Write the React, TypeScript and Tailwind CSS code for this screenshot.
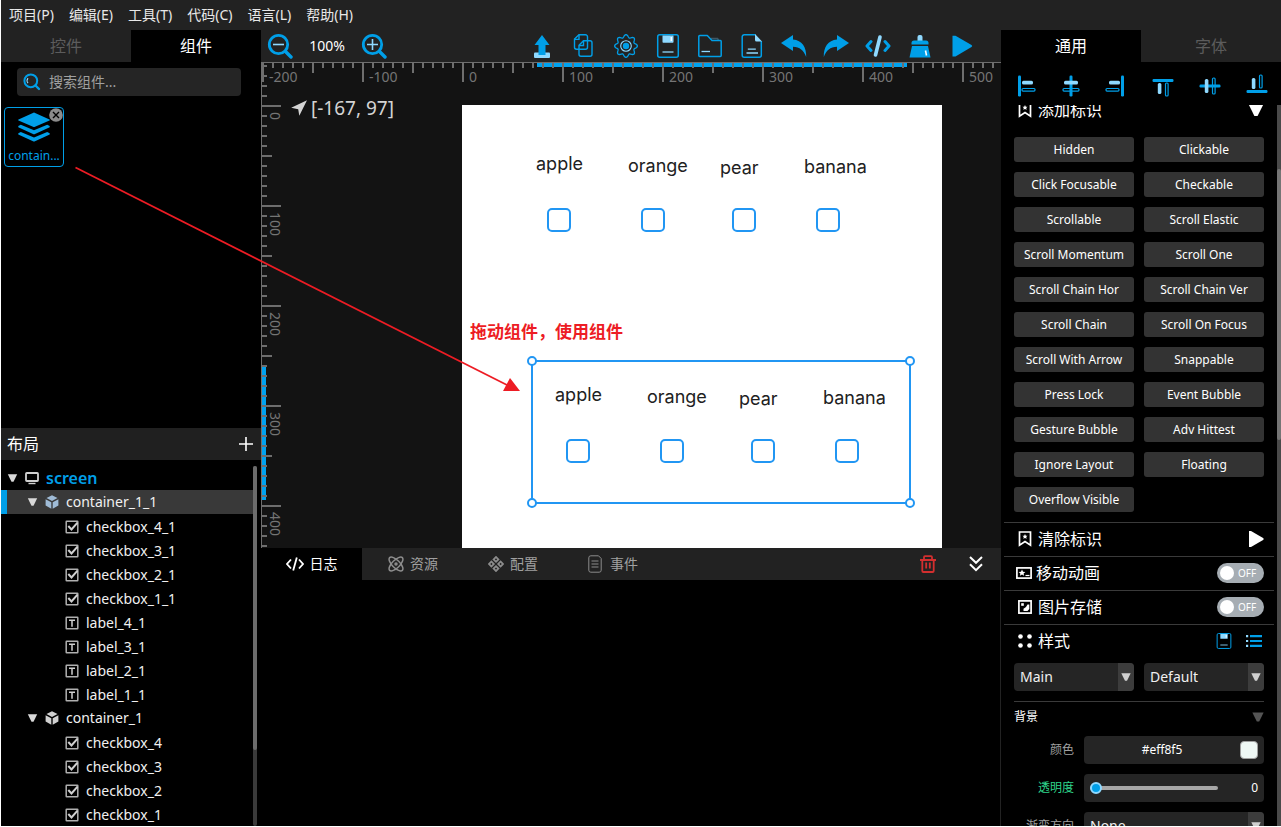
import React, { useState } from 'react';

type IconProps = { className?: string };

type TreeNode = {
  name: string;
  kind: 'screen' | 'container' | 'checkbox' | 'label';
  level: 0 | 1 | 2;
};

const MENUS = ['项目(P)', '编辑(E)', '工具(T)', '代码(C)', '语言(L)', '帮助(H)'];

const TREE: TreeNode[] = [
  { name: 'screen', kind: 'screen', level: 0 },
  { name: 'container_1_1', kind: 'container', level: 1 },
  { name: 'checkbox_4_1', kind: 'checkbox', level: 2 },
  { name: 'checkbox_3_1', kind: 'checkbox', level: 2 },
  { name: 'checkbox_2_1', kind: 'checkbox', level: 2 },
  { name: 'checkbox_1_1', kind: 'checkbox', level: 2 },
  { name: 'label_4_1', kind: 'label', level: 2 },
  { name: 'label_3_1', kind: 'label', level: 2 },
  { name: 'label_2_1', kind: 'label', level: 2 },
  { name: 'label_1_1', kind: 'label', level: 2 },
  { name: 'container_1', kind: 'container', level: 1 },
  { name: 'checkbox_4', kind: 'checkbox', level: 2 },
  { name: 'checkbox_3', kind: 'checkbox', level: 2 },
  { name: 'checkbox_2', kind: 'checkbox', level: 2 },
  { name: 'checkbox_1', kind: 'checkbox', level: 2 },
];

const FLAGS = [
  'Hidden', 'Clickable',
  'Click Focusable', 'Checkable',
  'Scrollable', 'Scroll Elastic',
  'Scroll Momentum', 'Scroll One',
  'Scroll Chain Hor', 'Scroll Chain Ver',
  'Scroll Chain', 'Scroll On Focus',
  'Scroll With Arrow', 'Snappable',
  'Press Lock', 'Event Bubble',
  'Gesture Bubble', 'Adv Hittest',
  'Ignore Layout', 'Floating',
  'Overflow Visible',
];

// Widgets inside one fruit container, relative to its top left corner
const FRUITS = [
  { text: 'apple', x: 24, y: 23, boxX: 35 },
  { text: 'orange', x: 116, y: 25, boxX: 129 },
  { text: 'pear', x: 208, y: 27, boxX: 220 },
  { text: 'banana', x: 292, y: 26, boxX: 304 },
];

const BLUE = '#009fe8';
const PALE = '#8fd9ff';

/* ---------- icons ---------- */

function ZoomIcon({ plus }: { plus?: boolean }) {
  return (
    <svg viewBox="0 0 26 26" className="size-[26px]" fill="none">
      <circle cx="11.5" cy="11.5" r="9.2" stroke={BLUE} strokeWidth="2.8" />
      <path d="M18.5 18.5L24 24" stroke={BLUE} strokeWidth="3.4" strokeLinecap="round" />
      <path d={plus ? 'M6 11.5h11M11.5 6v11' : 'M6 11.5h11'} stroke={PALE} strokeWidth="1.6" />
    </svg>
  );
}

function SearchIcon() {
  return (
    <svg viewBox="0 0 18 18" className="size-[18px] shrink-0" fill="none">
      <circle cx="7.8" cy="7.8" r="6.4" stroke={BLUE} strokeWidth="2" />
      <path d="M12.5 12.5L16 16" stroke={BLUE} strokeWidth="2.4" strokeLinecap="round" />
      <path d="M5 5.2a4 4 0 0 0 0 5" stroke={PALE} strokeWidth="1.1" />
    </svg>
  );
}

function UploadIcon() {
  return (
    <svg viewBox="0 0 24 24" className="size-6">
      <rect x="4" y="18.5" width="16" height="5.5" rx="1" fill={PALE} />
      <path d="M12 1l7.5 10h-4v10h-7V11h-4z" fill={BLUE} />
    </svg>
  );
}

function CopyIcon() {
  return (
    <svg viewBox="0 0 24 24" className="size-6" fill="none" stroke={BLUE} strokeWidth="1.4">
      <path d="M7 .8h6.5a2 2 0 0 1 2 2v10.4a2 2 0 0 1-2 2h-9a2 2 0 0 1-2-2V5z" />
      <path d="M2.500 5.400H7V.8" />
      <path d="M11.500 6.800H18a2 2 0 0 1 2 2v11.400a2 2 0 0 1-2 2H9a2 2 0 0 1-2-2V11.300z" />
      <path d="M7 11.500h4.500V6.800" />
    </svg>
  );
}

// outline with eight soft teeth
const GEAR_POINTS = Array.from({ length: 96 }, (_, i) => {
  const a = (i / 96) * Math.PI * 2;
  const r = 10 + 1.4 * Math.cos(a * 8);
  return `${(12 + r * Math.cos(a)).toFixed(2)},${(12 + r * Math.sin(a)).toFixed(2)}`;
}).join(' ');

function GearIcon() {
  return (
    <svg viewBox="0 0 24 24" className="size-6" fill="none">
      <polygon points={GEAR_POINTS} stroke={BLUE} strokeWidth="1.3" />
      <circle cx="12" cy="12" r="5.3" stroke={PALE} strokeWidth="1.1" />
      <circle cx="12" cy="12" r="3.2" fill={BLUE} />
    </svg>
  );
}

function SaveIcon({ className = 'size-6' }: IconProps) {
  return (
    <svg viewBox="0 0 24 24" className={className} fill="none">
      <rect x="1.700" y=".8" width="20.600" height="22.400" rx="2" stroke={BLUE} strokeWidth="1.500" />
      <path d="M6.500 1.500h11v6.500a.8.800 0 0 1-.8.800H7.300a.8.800 0 0 1-.8-.8z" fill={PALE} />
      <path d="M15.300 3v4" stroke="#fff" strokeWidth="1.500" />
      <path d="M6.500 18h11" stroke={PALE} strokeWidth="1.300" />
    </svg>
  );
}

function FolderIcon() {
  return (
    <svg viewBox="0 0 24 24" className="size-6" fill="none">
      <path d="M13 4.500h6.500l1 1.500" stroke="#3f5663" strokeWidth="1.500" />
      <path
        d="M.8 2.500a1 1 0 0 1 1-1h7.500L14 6.500h8.400a.9.900 0 0 1 .8.900v14.200a.9.900 0 0 1-.9.900H1.700a.9.900 0 0 1-.9-.9z"
        stroke={BLUE}
        strokeWidth="1.500"
        strokeLinejoin="round"
      />
      <path d="M3.500 17.500h8.500" stroke={PALE} strokeWidth="1.300" />
    </svg>
  );
}

function DocIcon() {
  return (
    <svg viewBox="0 0 24 24" className="size-6" fill="none">
      <path
        d="M15.500.8H4.200a2 2 0 0 0-2 2v18.400a2 2 0 0 0 2 2h15.100a2 2 0 0 0 2-2V7"
        stroke={BLUE}
        strokeWidth="1.500"
      />
      <path d="M15 0l7 7.500h-5.500A1.500 1.500 0 0 1 15 6z" fill={PALE} />
      <path d="M7.800 15.200h8M6.500 19h11.500" stroke={PALE} strokeWidth="1.300" />
    </svg>
  );
}

function UndoIcon({ className = 'size-[26px]' }: IconProps) {
  return (
    <svg viewBox="0 0 26 26" className={className} fill={BLUE}>
      <path d="M0 10L12 2v4.500c9 .8 13.500 7.500 13.200 17.500C22.500 17 19 14 12 13.700V18z" />
    </svg>
  );
}

function CodeIcon() {
  return (
    <svg viewBox="0 0 26 24" className="h-6 w-[26px]" fill="none" strokeLinecap="round">
      <path d="M6 7.500L2 12l4 4.500M20 7.500L24 12l-4 4.500" stroke={BLUE} strokeWidth="3" strokeLinejoin="round" />
      <path d="M15 3l-4.500 18" stroke={PALE} strokeWidth="3.600" />
    </svg>
  );
}

function BroomIcon() {
  return (
    <svg viewBox="0 0 24 24" className="size-6">
      <rect x="9.500" y="1" width="5" height="8" rx="2" fill={PALE} />
      <path d="M3.500 10.500V9a2.500 2.500 0 0 1 2.500-2.500h12A2.500 2.500 0 0 1 20.500 9v1.500z" fill={BLUE} />
      <path d="M4 12h16l2.500 11.500h-21z" fill={BLUE} />
      <path d="M17.500 16.500l1 5" stroke="#fff" strokeWidth="1.600" />
    </svg>
  );
}

function PlayIcon() {
  return (
    <svg viewBox="0 0 24 24" className="size-6" fill={BLUE}>
      <path d="M2.500 1.800h3L21.500 11a1.200 1.200 0 0 1 0 2L5.500 22.500h-3z" />
    </svg>
  );
}

// side: the bar sits left / in the middle / right of the two blocks
function AlignIcon({ side, vertical }: { side: 0 | 1 | 2; vertical?: boolean }) {
  const bar = [1, 10.5, 20][side];
  const long = [5, 4, 5][side];
  const short = [5, 5, 8][side];
  const shift = [4, 0, -4][side];
  return (
    <svg viewBox="0 0 24 24" className="size-6">
      <g transform={vertical ? `matrix(0 1 1 0 0 ${shift})` : undefined}>
        <rect x={bar} y="1.500" width="3" height="21" rx="1.200" fill={BLUE} />
        <rect
          x={long} y="14.500"
          width={side === 1 ? 16 : 13} height="2.600" rx="1"
          fill="none" stroke={BLUE} strokeWidth="1.200"
        />
        <rect x={short} y="6.800" width={side === 1 ? 14 : 11} height="3.600" rx="1.500" fill={PALE} />
      </g>
    </svg>
  );
}

function LayersIcon() {
  return (
    <svg viewBox="0 0 32 30" className="h-[30px] w-8" fill={BLUE}>
      <path d="M16 .5L31.500 7.500a.6.600 0 0 1 0 1.100L17 14.800a2.600 2.600 0 0 1-2 0L.5 8.600a.6.600 0 0 1 0-1.100z" />
      <path d="M.3 14l2.500-1.200L16 18.300l13.200-5.500 2.500 1.200v1.200L17 22a2.600 2.600 0 0 1-2 0L.3 15.200z" />
      <path d="M.3 21.200L2.800 20 16 25.500 29.200 20l2.500 1.200v1.200L17 29.200a2.600 2.600 0 0 1-2 0L.3 22.400z" />
    </svg>
  );
}

function CursorIcon() {
  return (
    <svg viewBox="0 0 16 16" className="size-4" fill="#d4d4d4">
      <path d="M16 .3L8.300 15.800 7.200 9.200.2 7.800z" />
    </svg>
  );
}

function TriangleDown({ className }: IconProps) {
  return (
    <svg viewBox="0 0 10 8" className={className} fill="currentColor">
      <path d="M.3.300h9.400L6 7.700H4z" />
    </svg>
  );
}

function NodeIcon({ kind, selected }: { kind: TreeNode['kind']; selected: boolean }) {
  if (kind === 'screen') {
    return (
      <svg viewBox="0 0 14 14" className="size-3.5" fill="none" stroke="#d0d0d0" strokeWidth="1.800">
        <rect x="1" y="2" width="12" height="8" rx=".8" />
        <path d="M3.500 12.500h7" strokeWidth="1.400" />
      </svg>
    );
  }
  if (kind === 'container') {
    return (
      <svg viewBox="0 0 14 14" className="size-3.5" fill={selected ? '#9fbbd6' : '#d0d0d0'}>
        <path d="M7 .2l5.500 2.700L7 5.900 1.500 2.900z" />
        <path d="M.6 4.200l5.700 3v6.500L.6 10.600z" />
        <path d="M13.400 4.200l-5.700 3v6.500l5.700-3.100z" />
      </svg>
    );
  }
  return (
    <svg viewBox="0 0 14 14" className="size-3.5" fill="none" stroke="#d0d0d0" strokeWidth="1.500">
      <rect x="1.200" y="1.200" width="11.600" height="11.600" rx=".5" stroke="#b0b0b0" />
      {kind === 'checkbox' ? (
        <path d="M3.300 6l3.200 3.500L12.500 2.600" strokeWidth="2" />
      ) : (
        <path d="M4 4.200h6M7 4.200v6.600" />
      )}
    </svg>
  );
}

function BookmarkIcon() {
  return (
    <svg viewBox="0 0 14 16" className="h-4 w-3.5" fill="none" stroke="#fff" strokeWidth="1.700">
      <path d="M1.500 1h11v13.200L7 10.500l-5.500 3.700z" />
      <path d="M7 3l.8 1.700 1.700.1-1.300 1.200.5 1.800L7 6.900l-1.700.9.5-1.800-1.300-1.200 1.700-.1z" fill="#fff" stroke="none" />
    </svg>
  );
}

/* ---------- ruler ---------- */

function Ruler({ vertical }: { vertical?: boolean }) {
  // origin: where value 0 falls, in pixels from the start of the ruler
  const origin = vertical ? 44 : 202;
  const first = vertical ? -40 : -200;
  const last = vertical ? 440 : 530;
  const ticks: number[] = [];
  for (let v = first; v <= last; v += 10) ticks.push(v);

  return (
    <svg
      className={
        vertical
          ? 'pointer-events-none absolute left-0 top-0 h-full w-6'
          : 'pointer-events-none absolute left-0 top-0 h-6 w-full'
      }
    >
      {vertical ? (
        <>
          <rect x="0" y="0" width="1" height="100%" fill="#6e6e6e" />
          <rect x="1" y="304" width="4" height="134" fill="#00a2f0" />
        </>
      ) : (
        <>
          <rect x="0" y="0" width="100%" height="1" fill="#6e6e6e" />
          <rect x="276" y="1" width="370" height="4" fill="#00a2f0" />
        </>
      )}
      {ticks.map(v => {
        const len = v % 100 === 0 ? 20 : v % 50 === 0 ? 11 : 6;
        const pos = origin + v - 1;
        return vertical ? (
          <rect key={v} x="0" y={pos} width={len} height="2" fill="#6e6e6e" />
        ) : (
          <rect key={v} x={pos} y="0" width="2" height={len} fill="#6e6e6e" />
        );
      })}
      {ticks
        .filter(v => v % 100 === 0)
        .map(v => (
          <text
            key={v}
            fontSize="14"
            fill="#757575"
            transform={
              vertical
                ? `translate(9 ${origin + v + 6}) rotate(90)`
                : `translate(${origin + v + 6} 20)`
            }
          >
            {v}
          </text>
        ))}
    </svg>
  );
}

/* ---------- left column ---------- */

function LeftPanel() {
  const [selected, setSelected] = useState('container_1_1');

  return (
    <aside className="flex w-[260px] shrink-0 flex-col bg-black">
      <div className="grid h-8 shrink-0 grid-cols-2 text-base">
        <button className="bg-[#222] text-[#5c5c5c]">控件</button>
        <button className="bg-black text-white">组件</button>
      </div>

      <div className="min-h-0 flex-1">
        <label className="mx-4 mt-1.5 mr-5 flex h-7 items-center gap-2 rounded bg-[#252525] pl-1.5">
          <SearchIcon />
          <input
            aria-label="搜索组件"
            placeholder="搜索组件..."
            className="w-full min-w-0 bg-transparent text-sm text-white outline-none placeholder:text-[#a0a0a0]"
          />
        </label>

        <button className="relative mt-[11px] ml-[3px] flex size-[60px] flex-col items-center rounded-sm border border-[#009fe8] pt-1">
          <LayersIcon />
          <span className="mt-1.5 text-xs text-[#009fe8]">contain...</span>
          <svg viewBox="0 0 14 14" className="absolute top-0 right-0 size-3.5">
            <circle cx="7" cy="7" r="6.800" fill="#8b8b8b" />
            <path d="M4 4l6 6M10 4l-6 6" stroke="#000" strokeWidth="1.400" />
          </svg>
        </button>
      </div>

      <div className="flex h-8 shrink-0 items-center justify-between bg-[#202020] pr-[7px] pl-1.5 text-base text-white">
        <span>布局</span>
        <button aria-label="add">
          <svg viewBox="0 0 16 16" className="size-4" stroke="#fff" strokeWidth="1.600">
            <path d="M1 8h14M8 1v14" />
          </svg>
        </button>
      </div>

      <div className="flex shrink-0 pt-1.5">
        <ul className="flex-1">
          {TREE.map(node => {
            const active = node.name === selected;
            return (
              <li key={node.name}>
                <button
                  onClick={() => setSelected(node.name)}
                  className={
                    'flex h-6 w-full items-center gap-[7px] border-l-[6px] text-left text-sm ' +
                    (active ? 'border-[#009fe8] bg-[#393939] ' : 'border-transparent ') +
                    (node.level === 0 ? 'pl-0' : node.level === 1 ? 'pl-5' : 'pl-[58px] pt-0.5')
                  }
                >
                  {node.level < 2 && <TriangleDown className="h-2 w-[11px] text-[#d8d8d8]" />}
                  <NodeIcon kind={node.kind} selected={active} />
                  <span
                    className={
                      node.level === 0 ? 'text-base font-semibold text-[#009fe8]' : 'text-[#f0f0f0]'
                    }
                  >
                    {node.name}
                  </span>
                </button>
              </li>
            );
          })}
        </ul>
        <div className="mr-1 w-1 rounded bg-[#3a3a3a]">
          <div className="h-[284px] rounded bg-[#6c6c6c]" />
        </div>
      </div>
    </aside>
  );
}

/* ---------- centre column ---------- */

function Toolbar() {
  return (
    <div className="flex h-8 shrink-0 items-center bg-[#222] pr-[27px] pl-1.5 text-sm text-white">
      <button aria-label="zoom out"><ZoomIcon /></button>
      <span className="w-[68px] text-center">100%</span>
      <button aria-label="zoom in"><ZoomIcon plus /></button>
      <div className="ml-auto flex items-center gap-[18px] *:flex *:w-6 *:justify-center *:[&>svg]:shrink-0">
        <button aria-label="export"><UploadIcon /></button>
        <button aria-label="copy"><CopyIcon /></button>
        <button aria-label="settings"><GearIcon /></button>
        <button aria-label="save"><SaveIcon /></button>
        <button aria-label="open"><FolderIcon /></button>
        <button aria-label="file"><DocIcon /></button>
        <button aria-label="undo"><UndoIcon /></button>
        <button aria-label="redo"><UndoIcon className="size-[26px] -scale-x-100" /></button>
        <button aria-label="code"><CodeIcon /></button>
        <button aria-label="clean"><BroomIcon /></button>
        <button aria-label="run"><PlayIcon /></button>
      </div>
    </div>
  );
}

function FruitGroup({ id }: { id: string }) {
  return (
    <>
      {FRUITS.map(f => (
        <React.Fragment key={f.text}>
          <label
            htmlFor={id + f.text}
            className="absolute font-['Inter',sans-serif] text-lg leading-6 text-[#212121]"
            style={{ left: f.x, top: f.y }}
          >
            {f.text}
          </label>
          <input
            id={id + f.text}
            type="checkbox"
            className="absolute top-[79px] size-6 appearance-none rounded-[5px] border-2 border-[#2196f3] bg-white checked:bg-[#2196f3]"
            style={{ left: f.boxX }}
          />
        </React.Fragment>
      ))}
    </>
  );
}

function Stage() {
  return (
    <div className="relative min-h-0 flex-1 overflow-hidden bg-[#131313]">
      <div className="absolute top-[43px] left-[201px] h-[480px] w-[480px] bg-white">
        <div className="absolute top-[24px] left-[50px]">
          <FruitGroup id="a" />
        </div>
        <p className="absolute top-[215px] left-2 text-[17px] leading-6 font-bold text-[#ed1c24]">
          拖动组件，使用组件
        </p>
        <div className="absolute top-[255px] left-[69px] h-[144px] w-[380px] border-2 border-[#2196f3]">
          <div className="absolute -top-[2px] -left-[2px]">
            <FruitGroup id="b" />
          </div>
          <i className="absolute -top-1.5 -left-1.5 size-2.5 rounded-full border-2 border-[#2196f3] bg-white" />
          <i className="absolute -top-1.5 -right-1.5 size-2.5 rounded-full border-2 border-[#2196f3] bg-white" />
          <i className="absolute -bottom-1.5 -left-1.5 size-2.5 rounded-full border-2 border-[#2196f3] bg-white" />
          <i className="absolute -right-1.5 -bottom-1.5 size-2.5 rounded-full border-2 border-[#2196f3] bg-white" />
        </div>
      </div>
      <Ruler />
      <Ruler vertical />
      <div className="absolute top-8 left-[30px] flex items-center gap-1 text-[19px] leading-7 text-[#d4d4d4]">
        <CursorIcon />
        <span>[-167, 97]</span>
      </div>
    </div>
  );
}

function LogPanel() {
  return (
    <section className="flex h-[278px] shrink-0 flex-col border-r border-[#222] bg-black">
      <div className="flex h-8 items-center bg-[#222] text-sm text-[#a0a0a0]">
        <button className="flex h-8 w-[101px] items-center justify-center gap-1.5 bg-black text-white">
          <svg viewBox="0 0 18 16" className="h-4 w-[18px]" fill="none" stroke="#fff" strokeWidth="1.800">
            <path d="M5 3.500L1 8l4 4.500M13 3.500L17 8l-4 4.500M10.800 1.500l-3.600 13" />
          </svg>
          日志
        </button>
        <button className="flex h-8 w-[102px] items-center justify-center gap-1.5">
          <svg viewBox="0 0 16 16" className="size-4" fill="none" stroke="#8c8c8c" strokeWidth="1.500">
            <ellipse cx="8" cy="8" rx="9" ry="3.800" transform="rotate(45 8 8)" />
            <ellipse cx="8" cy="8" rx="9" ry="3.800" transform="rotate(-45 8 8)" />
            <circle cx="8" cy="8" r="1" fill="#8c8c8c" />
          </svg>
          资源
        </button>
        <button className="flex h-8 w-[98px] items-center justify-center gap-1.5">
          <svg viewBox="0 0 16 16" className="size-4" fill="none" stroke="#8c8c8c" strokeWidth="1.800">
            <rect x="6.300" y="1.700" width="3.400" height="3.400" transform="rotate(45 8 3.400)" />
            <rect x="6.300" y="10.900" width="3.400" height="3.400" transform="rotate(45 8 12.600)" />
            <rect x="1.700" y="6.300" width="3.400" height="3.400" transform="rotate(45 3.400 8)" />
            <rect x="10.900" y="6.300" width="3.400" height="3.400" transform="rotate(45 12.600 8)" />
          </svg>
          配置
        </button>
        <button className="flex h-8 w-[102px] items-center justify-center gap-2">
          <svg viewBox="0 0 14 18" className="h-[18px] w-3.5" fill="none" stroke="#8c8c8c" strokeWidth="1">
            <path d="M3 .8h7.500l2.700 2.700v11.700a2 2 0 0 1-2 2H2.800a2 2 0 0 1-2-2V2.800a2 2 0 0 1 2-2z" />
            <path d="M3.500 6h7M3.500 9h7M3.500 12h7" />
          </svg>
          事件
        </button>
        <div className="ml-auto flex items-center gap-[31px] pr-[15px]">
          <button aria-label="clear log">
            <svg viewBox="0 0 16 18" className="h-[18px] w-4" fill="none" stroke="#d32f2f" strokeWidth="1.800">
              <path d="M0 5h16M4 4.500V2.200a1 1 0 0 1 1-1h6a1 1 0 0 1 1 1v2.300M2.300 5v11a1 1 0 0 0 1 1h9.400a1 1 0 0 0 1-1V5" />
              <path d="M6.200 7.500v6M9.800 7.500v6" />
            </svg>
          </button>
          <button aria-label="collapse">
            <svg viewBox="0 0 18 16" className="h-4 w-[18px]" fill="none" stroke="#fff" strokeWidth="2">
              <path d="M3 1l6 5.800L15 1M3 8.300l6 5.800 6-5.800" />
            </svg>
          </button>
        </div>
      </div>
    </section>
  );
}

/* ---------- right column ---------- */

function Toggle({ label }: { label: string }) {
  const [on, setOn] = useState(false);
  return (
    <label className="ml-auto flex h-5 w-[47px] items-center rounded-full bg-[#a6adb3] px-[3px] text-[10px] text-white">
      <input
        type="checkbox"
        aria-label={label}
        checked={on}
        onChange={e => setOn(e.target.checked)}
        className="mr-1 size-3.5 appearance-none rounded-full bg-white"
      />
      {on ? 'ON' : 'OFF'}
    </label>
  );
}

function Dropdown({ label, value }: { label: string; value: string }) {
  return (
    <div className="relative h-7 min-w-0 flex-1 overflow-hidden rounded bg-[#252525]">
      <select
        aria-label={label}
        defaultValue={value}
        className="h-full w-full appearance-none bg-transparent px-1.5 text-sm text-[#f0f0f0]"
      >
        <option>{value}</option>
      </select>
      <span className="pointer-events-none absolute inset-y-0 right-0 flex w-4 items-center justify-center bg-[#3c3c3c] text-[#d0d0d0]">
        <TriangleDown className="h-2 w-2.5" />
      </span>
    </div>
  );
}

function RightPanel() {
  const [opacity, setOpacity] = useState(0);
  const [color, setColor] = useState('#eff8f5');

  return (
    <aside className="flex w-[280px] shrink-0 flex-col bg-black text-white">
      <div className="grid h-8 shrink-0 grid-cols-2 text-base">
        <button className="bg-black">通用</button>
        <button className="bg-[#222] text-[#5c5c5c]">字体</button>
      </div>

      <div className="flex h-[43px] shrink-0 items-center justify-between pt-1 pr-3 pl-4">
        <div className="flex gap-[18px]">
          <button aria-label="align left"><AlignIcon side={0} /></button>
          <button aria-label="align centre"><AlignIcon side={1} /></button>
          <button aria-label="align right"><AlignIcon side={2} /></button>
        </div>
        <div className="flex gap-[23px]">
          <button aria-label="align top"><AlignIcon side={0} vertical /></button>
          <button aria-label="align middle"><AlignIcon side={1} vertical /></button>
          <button aria-label="align bottom"><AlignIcon side={2} vertical /></button>
        </div>
      </div>

      <div className="flex min-h-0 flex-1 overflow-hidden">
        {/* property list, scrolled a little way down */}
        <div className="-mt-[11px] min-w-0 flex-1 pl-[3px] text-base">
          <div className="flex h-[34px] items-center gap-1.5 pr-2.5 pb-0.5 pl-3.5">
            <BookmarkIcon />
            <span>添加标识</span>
            <TriangleDown className="ml-auto h-3.5 w-4" />
          </div>

          <div className="mt-[9px] grid grid-cols-2 gap-2.5 px-2.5">
            {FLAGS.map(flag => (
              <button key={flag} className="h-[25px] rounded-[3px] bg-[#333] text-xs">
                {flag}
              </button>
            ))}
          </div>

          <div className="mt-2.5 border-t border-[#3a3a3a]">
            <div className="flex h-[34px] items-center gap-1.5 border-b border-[#3a3a3a] pr-2.5 pb-px pl-3.5">
              <BookmarkIcon />
              <span>清除标识</span>
              <svg viewBox="0 0 16 16" className="ml-auto size-4" fill="#fff">
                <path d="M1 0h2l12.500 7.200v1.600L3 16H1z" />
              </svg>
            </div>
            <div className="flex h-[34px] items-center gap-1 border-b border-[#3a3a3a] pr-2.5 pb-px pl-3">
              <svg viewBox="0 0 16 12" className="h-3 w-4" fill="none" stroke="#fff" strokeWidth="1.700">
                <rect x=".9" y=".9" width="14.200" height="10.200" />
                <path d="M6 2.500l1 2.200 2.400.2-1.800 1.500.5 2.400L6 7.600 3.900 8.800l.5-2.400-1.800-1.500 2.400-.2z" fill="#fff" stroke="none" />
                <path d="M9.500 8.500h4" strokeWidth="1.200" />
              </svg>
              <span>移动动画</span>
              <Toggle label="移动动画" />
            </div>
            <div className="flex h-[34px] items-center gap-1.5 border-b border-[#3a3a3a] pr-2.5 pb-px pl-3.5">
              <svg viewBox="0 0 14 14" className="size-3.5" fill="none" stroke="#fff" strokeWidth="1.700">
                <rect x=".9" y=".9" width="12.200" height="12.200" />
                <rect x="3.200" y="3.200" width="2.600" height="2.600" fill="#fff" stroke="none" />
                <path d="M5.500 11V8.800L8 7l1.500-2.500H11.300V9L9.500 11z" fill="#fff" stroke="none" />
              </svg>
              <span>图片存储</span>
              <Toggle label="图片存储" />
            </div>
            <div className="flex h-[34px] items-center gap-1.5 pr-3 pb-0.5 pl-3.5">
              <svg viewBox="0 0 14 14" className="size-3.5" fill="#fff">
                <circle cx="2.500" cy="2.500" r="2.300" />
                <circle cx="11.500" cy="2.500" r="2.300" />
                <circle cx="2.500" cy="11.500" r="2.300" />
                <circle cx="11.500" cy="11.500" r="2.300" />
              </svg>
              <span>样式</span>
              <button aria-label="save style" className="ml-auto"><SaveIcon className="size-4" /></button>
              <button aria-label="style list" className="ml-2">
                <svg viewBox="0 0 16 12" className="h-3 w-4" fill="none" strokeWidth="2.200">
                  <path d="M0 1.200h2.200M0 6h2.200M0 10.800h2.200" stroke={PALE} />
                  <path d="M4 1.200h12M4 6h12M4 10.800h12" stroke={BLUE} />
                </svg>
              </button>
            </div>
          </div>

          <div className="mt-1 flex gap-2.5 px-2.5">
            <Dropdown label="part" value="Main" />
            <Dropdown label="state" value="Default" />
          </div>

          <div className="mx-2.5 mt-2.5 border-t border-[#3a3a3a] text-xs">
            <div className="flex h-[34px] items-center justify-between pb-1">
              <span>背景</span>
              <TriangleDown className="h-3 w-3 text-[#555]" />
            </div>
            <div className="grid grid-cols-[60px_minmax(0,1fr)] items-center gap-2.5">
              <label htmlFor="bg-color" className="text-right text-[#a0a0a0]">颜色</label>
              <div className="flex h-7 items-center rounded bg-[#252525] pr-1.5">
                <input
                  id="bg-color"
                  value={color}
                  onChange={e => setColor(e.target.value)}
                  className="min-w-0 flex-1 bg-transparent text-center outline-none"
                />
                <span className="size-[18px] rounded-sm border border-[#a0a0a0]" style={{ backgroundColor: color }} />
              </div>

              <label htmlFor="bg-opa" className="text-right text-[#2ed58b]">透明度</label>
              <div className="flex h-7 items-center justify-between rounded bg-[#252525] px-1.5">
                <input
                  id="bg-opa"
                  type="range"
                  min={0}
                  max={255}
                  value={opacity}
                  onChange={e => setOpacity(Number(e.target.value))}
                  className="h-3 w-32 appearance-none bg-transparent [&::-webkit-slider-runnable-track]:h-1 [&::-webkit-slider-runnable-track]:rounded-full [&::-webkit-slider-runnable-track]:bg-[#a6a6a6] [&::-webkit-slider-thumb]:-mt-1 [&::-webkit-slider-thumb]:size-3 [&::-webkit-slider-thumb]:appearance-none [&::-webkit-slider-thumb]:rounded-full [&::-webkit-slider-thumb]:border-2 [&::-webkit-slider-thumb]:border-[#8fd9ff] [&::-webkit-slider-thumb]:bg-[#009fe8]"
                />
                <span>{opacity}</span>
              </div>

              <span className="text-right text-[#a0a0a0]">渐变方向</span>
              <Dropdown label="渐变方向" value="None" />
            </div>
          </div>
        </div>
        <div className="ml-[3px] w-1 shrink-0 bg-[#4a4a4a] pt-16">
          <div className="h-[271px] rounded bg-[#757575]" />
        </div>
      </div>
    </aside>
  );
}

export default function App() {
  return (
    <div className="relative h-screen overflow-hidden bg-white pb-px pl-px font-['Noto_Sans','Noto_Sans_CJK_SC',sans-serif]">
      <div className="flex h-full flex-col overflow-hidden bg-black">
        <nav className="flex h-[30px] shrink-0 items-center gap-[15px] bg-[#222] pl-2 text-sm text-[#e8e8e8]">
          {MENUS.map(menu => (
            <button key={menu}>{menu}</button>
          ))}
        </nav>
        <div className="flex min-h-0 flex-1">
          <LeftPanel />
          <main className="flex min-w-0 flex-1 flex-col">
            <Toolbar />
            <Stage />
            <LogPanel />
          </main>
          <RightPanel />
        </div>
      </div>

      {/* drag hint, drawn over both the panel and the stage */}
      <svg className="pointer-events-none absolute top-0 left-0 size-full">
        <path d="M75.500 167.500L508 385.500" stroke="#ed1c24" strokeWidth="1.800" />
        <path d="M520 391h-17l7-13z" fill="#ed1c24" />
      </svg>
    </div>
  );
}
